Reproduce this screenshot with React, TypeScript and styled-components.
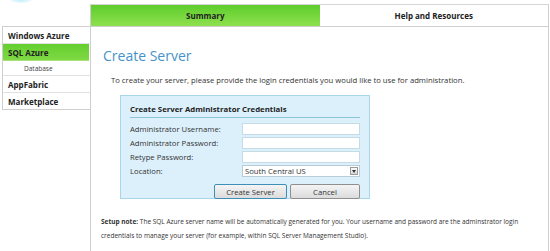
import styled, { createGlobalStyle } from "styled-components";

const GlobalStyle = createGlobalStyle`
  html, body {
    margin: 0;
    padding: 0;
    background: #ffffff;
  }
  body {
    font-family: "Open Sans", "Liberation Sans", sans-serif;
    color: #333333;
  }
`;

const Page = styled.div`
  position: relative;
  width: 550px;
  height: 251px;
  overflow: hidden;
  display: flex;
  padding-left: 2px;
  box-sizing: border-box;
`;

const LogoBlob = styled.div`
  position: absolute;
  left: 10px;
  top: -4px;
  width: 22px;
  height: 7px;
  border-radius: 50%;
  background: radial-gradient(ellipse, #bfeefa 0%, #e6f8fd 60%, #ffffff 100%);
`;

const Sidebar = styled.div`
  width: 88px;
  margin-top: 26px;
  display: flex;
  flex-direction: column;
`;

const NavList = styled.div`
  border-left: 1px solid #cfcfcf;
  border-top: 1px solid #cfcfcf;
  border-bottom: 1px solid #cfcfcf;
`;

const NavItem = styled.div<{ $active?: boolean; $last?: boolean }>`
  height: 16px;
  display: flex;
  align-items: center;
  padding-left: 5px;
  font-size: 8px;
  font-weight: 700;
  color: #222;
  background: ${(p) => (p.$active ? "linear-gradient(#64cf2f, #7fd943)" : "#fff")};
  border-bottom: ${(p) => (p.$last ? "none" : `1px solid ${p.$active ? "#a9e07c" : "#e2e2e2"}`)};
  margin-right: ${(p) => (p.$active ? "1px" : "0")};
`;

const SubItem = styled.div`
  height: 14px;
  display: flex;
  align-items: center;
  padding-left: 21px;
  font-size: 6.5px;
  color: #444;
  border-bottom: 1px solid #e2e2e2;
`;

const Main = styled.div`
  margin-top: 4px;
  width: 457px;
  border-left: 1px solid #cfcfcf;
  border-right: 1px solid #cfcfcf;
  border-top: 1px solid #d6d6d6;
  display: flex;
  flex-direction: column;
`;

const Tabs = styled.div`
  display: flex;
  height: 21px;
  border-bottom: 1px solid #cfcfcf;
`;

const Tab = styled.div<{ $active?: boolean }>`
  flex: 1;
  display: flex;
  align-items: center;
  justify-content: center;
  font-size: 8px;
  font-weight: 700;
  color: #222;
  background: ${(p) => (p.$active ? "linear-gradient(#5dcd2c, #8fe04e)" : "#fff")};
`;

const Content = styled.div`
  padding: 19px 0 0 12px;
  display: flex;
  flex-direction: column;
`;

const Heading = styled.h1`
  margin: 0;
  font-size: 14px;
  font-weight: 400;
  color: #4592c9;
  line-height: 20px;
`;

const Intro = styled.p`
  margin: 8px 0 0 8px;
  font-size: 7.7px;
  color: #333;
  line-height: 12px;
`;

const CredBox = styled.div`
  margin: 9px 0 0 17px;
  width: 250px;
  height: 104px;
  box-sizing: border-box;
  background: #dcf0fb;
  border: 1px solid #a9d5e8;
  padding: 8px 9px 0 9px;
  display: flex;
  flex-direction: column;
`;

const BoxTitle = styled.div`
  font-size: 7.8px;
  font-weight: 700;
  color: #222;
  padding-bottom: 2px;
  border-bottom: 1px solid #8cc4da;
  line-height: 11px;
`;

const Fields = styled.div`
  margin-top: 5px;
  display: grid;
  grid-template-columns: 112px 118px;
  row-gap: 2px;
`;

const Label = styled.div`
  font-size: 7.7px;
  color: #333;
  height: 12px;
  line-height: 12px;
`;

const Input = styled.div`
  height: 10px;
  background: #fff;
  border: 1px solid #c5dbe6;
`;

const Select = styled.div`
  height: 10px;
  background: #fff;
  border: 1px solid #b9ccd6;
  display: flex;
  align-items: center;
  justify-content: space-between;
  font-size: 7.7px;
  color: #333;
  padding-left: 2px;
`;

const SelectArrow = styled.div`
  width: 8px;
  height: 8px;
  margin-right: 1px;
  border: 1px solid #9a9a9a;
  box-sizing: border-box;
  background: linear-gradient(#fafafa, #d8d8d8);
  display: flex;
  align-items: center;
  justify-content: center;
`;

const ButtonRow = styled.div`
  margin-top: 7px;
  display: flex;
  justify-content: flex-end;
  gap: 3px;
`;

const Button = styled.div<{ $focused?: boolean }>`
  height: 13px;
  display: flex;
  align-items: center;
  justify-content: center;
  font-size: 7.7px;
  color: #333;
  background: linear-gradient(#f4f4f4, #dcdcdc);
  border: 1px solid ${(p) => (p.$focused ? "#3d8fb8" : "#8f8f8f")};
  border-radius: 2px;
  width: ${(p) => (p.$focused ? "71px" : "68px")};
`;

const Note = styled.p`
  margin: 16px 0 0 -2px;
  font-size: 6.5px;
  line-height: 14px;
  color: #333;
  width: 430px;
`;

export default function App() {
  return (
    <>
      <GlobalStyle />
      <Page>
        <LogoBlob />
        <Sidebar>
          <NavList>
            <NavItem>Windows Azure</NavItem>
            <NavItem $active>SQL Azure</NavItem>
            <SubItem>Database</SubItem>
            <NavItem>AppFabric</NavItem>
            <NavItem $last>Marketplace</NavItem>
          </NavList>
        </Sidebar>
        <Main>
          <Tabs>
            <Tab $active>Summary</Tab>
            <Tab>Help and Resources</Tab>
          </Tabs>
          <Content>
            <Heading>Create Server</Heading>
            <Intro>
              To create your server, please provide the login credentials you would like to use for
              administration.
            </Intro>
            <CredBox>
              <BoxTitle>Create Server Administrator Credentials</BoxTitle>
              <Fields>
                <Label>Administrator Username:</Label>
                <Input />
                <Label>Administrator Password:</Label>
                <Input />
                <Label>Retype Password:</Label>
                <Input />
                <Label>Location:</Label>
                <Select>
                  South Central US
                  <SelectArrow>
                    <svg width="4" height="3" viewBox="0 0 4 3">
                      <path d="M0 0H4L2 3Z" fill="#333" />
                    </svg>
                  </SelectArrow>
                </Select>
              </Fields>
              <ButtonRow>
                <Button $focused>Create Server</Button>
                <Button>Cancel</Button>
              </ButtonRow>
            </CredBox>
            <Note>
              <b>Setup note:</b> The SQL Azure server name will be automatically generated for you.
              Your username and password are the adminstrator login credentials to manage your
              server (for example, within SQL Server Management Studio).
            </Note>
          </Content>
        </Main>
      </Page>
    </>
  );
}
